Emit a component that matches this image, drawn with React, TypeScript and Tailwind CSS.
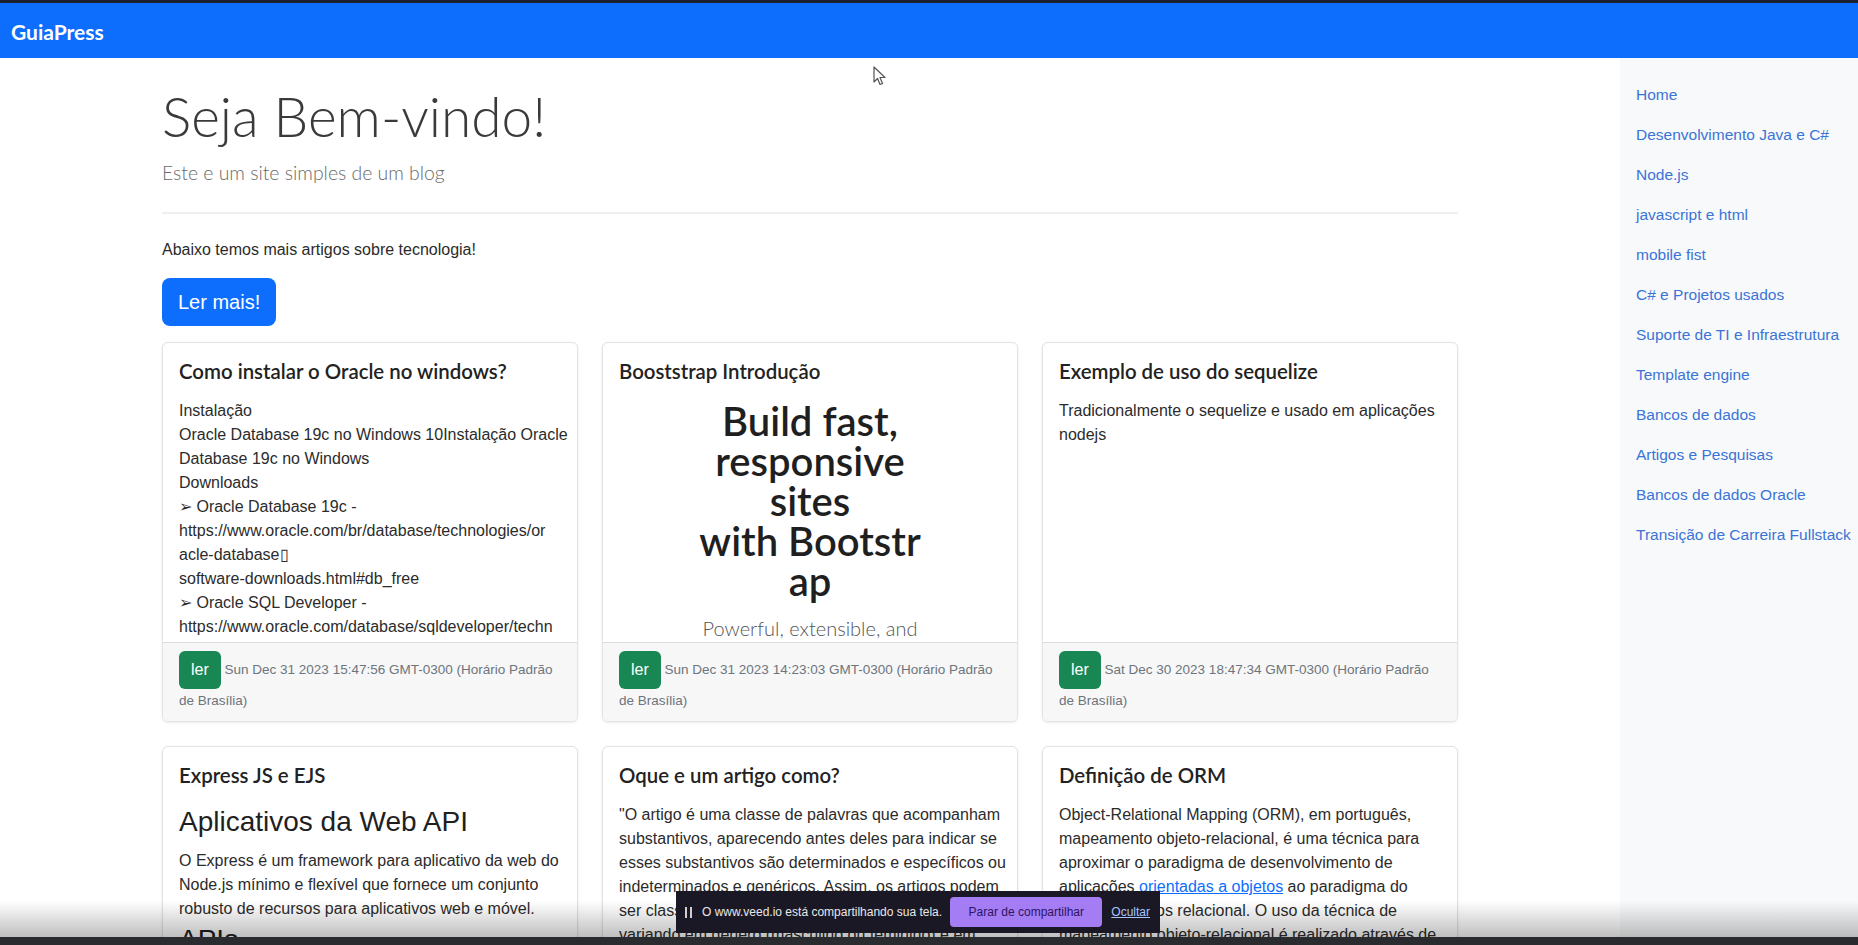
import React from 'react';

const sidebarLinks = [
    'Home',
    'Desenvolvimento Java e C#',
    'Node.js',
    'javascript e html',
    'mobile fist',
    'C# e Projetos usados',
    'Suporte de TI e Infraestrutura',
    'Template engine',
    'Bancos de dados',
    'Artigos e Pesquisas',
    'Bancos de dados Oracle',
    'Transição de Carreira Fullstack',
];

const oracleLines = [
    'Instalação',
    'Oracle Database 19c no Windows 10Instalação Oracle',
    'Database 19c no Windows',
    'Downloads',
    '➢ Oracle Database 19c -',
    'https://www.oracle.com/br/database/technologies/or',
    'acle-database\u25AF',
    'software-downloads.html#db_free',
    '➢ Oracle SQL Developer -',
    'https://www.oracle.com/database/sqldeveloper/techn',
    'nologies/download.html',
];

const artigoLines = [
    '"O artigo é uma classe de palavras que acompanham',
    'substantivos, aparecendo antes deles para indicar se',
    'esses substantivos são determinados e específicos ou',
    'indeterminados e genéricos. Assim, os artigos podem',
    'ser classificados em definidos e indefinidos,',
    'variando em gênero (masculino ou feminino) e em',
];

const Lines = ({ lines }: { lines: string[] }) => (
    <div className="text-base leading-6 text-[#2b2b2b]">
        {lines.map((l, i) => (
            <div key={i} className="whitespace-nowrap">{l}</div>
        ))}
    </div>
);

const Card = ({ title, date, children }: { title: string; date?: string; children: React.ReactNode }) => {
    return (
        <div className="flex flex-col rounded-md border border-[#e3e3e3] bg-white shadow-[0_1px_3px_rgba(0,0,0,0.08)] overflow-hidden">
            <div className="h-[299px] shrink-0 overflow-hidden px-4 pt-4">
                <h5 className="mb-4 whitespace-nowrap font-['Lato',sans-serif] text-[20.4px] font-semibold leading-6 text-[#222]">{title}</h5>
                {children}
            </div>
            {date && (
                <div className="border-t border-[#dcdcdc] bg-[#f7f7f7] px-4 py-2 text-[13.5px] leading-6 text-[#6c757d]">
                    <button className="h-[38px] rounded-md bg-[#198754] px-3 align-middle text-base text-white">ler</button>{' '}
                    {date}
                    <br />
                    de Brasília)
                </div>
            )}
        </div>
    );
};

export default function App() {
    return (
        <div className="relative h-[945px] w-full overflow-hidden bg-white font-['Liberation_Sans',Arial,sans-serif] text-[#212529]">
            {/* top frame strip */}
            <div className="h-[3px] bg-[#1b2130]" />

            {/* Navbar */}
            <nav className="flex h-[55px] items-center bg-[#0d6efd] px-[11px] pt-[2px]">
                <span className="font-['Lato',sans-serif] text-[21px] font-bold text-white">GuiaPress</span>
            </nav>

            <div className="flex">
                {/* Main */}
                <main className="min-w-0 flex-1">
                    <div className="mx-auto w-[1320px] px-3 pt-[25px]">
                        <h1 className="font-['Lato',sans-serif] text-[55px] font-light leading-[67px] text-[#3a3a3a]">Seja Bem-vindo!</h1>
                        <p className="mt-2 font-['Lato',sans-serif] text-[19.4px] font-light leading-[30px] text-[#6a6a6a]">Este e um site simples de um blog</p>
                        <hr className="my-6 border-t-2 border-[#efefef]" />
                        <p className="text-base leading-6 text-[#2b2b2b]">Abaixo temos mais artigos sobre tecnologia!</p>
                        <button className="mt-4 h-[48px] rounded-lg bg-[#0d6efd] px-4 text-[20px] text-white">Ler mais!</button>

                        <div className="mt-4 grid grid-cols-3 gap-6">
                            <Card title="Como instalar o Oracle no windows?" date="Sun Dec 31 2023 15:47:56 GMT-0300 (Horário Padrão">
                                <Lines lines={oracleLines} />
                            </Card>

                            <Card title="Booststrap Introdução" date="Sun Dec 31 2023 14:23:03 GMT-0300 (Horário Padrão">
                                <div className="flex flex-col items-center pt-[2px] text-center">
                                    <div className="font-['Lato',sans-serif] text-[40px] font-semibold leading-10 text-[#1f1f1f]">
                                        <div>Build fast,</div>
                                        <div>responsive</div>
                                        <div>sites</div>
                                        <div>with Bootstr</div>
                                        <div>ap</div>
                                    </div>
                                    <p className="mt-3 font-['Lato',sans-serif] text-[20px] font-light leading-[30px] text-[#555]">Powerful, extensible, and</p>
                                </div>
                            </Card>

                            <Card title="Exemplo de uso do sequelize" date="Sat Dec 30 2023 18:47:34 GMT-0300 (Horário Padrão">
                                <Lines lines={['Tradicionalmente o sequelize e usado em aplicações', 'nodejs']} />
                            </Card>

                            <Card title="Express JS e EJS">
                                <h2 className="mb-2 text-[28px] leading-[38px] text-[#1f1f1f]">Aplicativos da Web API</h2>
                                <Lines
                                    lines={[
                                        'O Express é um framework para aplicativo da web do',
                                        'Node.js mínimo e flexível que fornece um conjunto',
                                        'robusto de recursos para aplicativos web e móvel.',
                                    ]}
                                />
                                <h2 className="text-[28px] leading-[38px] text-[#1f1f1f]">APIs</h2>
                            </Card>

                            <Card title="Oque e um artigo como?">
                                <Lines lines={artigoLines} />
                            </Card>

                            <Card title="Definição de ORM">
                                <div className="text-base leading-6 text-[#2b2b2b]">
                                    <div className="whitespace-nowrap">Object-Relational Mapping (ORM), em português,</div>
                                    <div className="whitespace-nowrap">mapeamento objeto-relacional, é uma técnica para</div>
                                    <div className="whitespace-nowrap">aproximar o paradigma de desenvolvimento de</div>
                                    <div className="whitespace-nowrap">
                                        aplicações <a className="text-[#0d6efd] underline">orientadas a objetos</a> ao paradigma do
                                    </div>
                                    <div className="whitespace-nowrap">banco de dados relacional. O uso da técnica de</div>
                                    <div className="whitespace-nowrap">mapeamento objeto-relacional é realizado através de</div>
                                </div>
                            </Card>
                        </div>
                    </div>
                </main>

                {/* Sidebar */}
                <aside className="h-[887px] w-[238px] shrink-0 bg-[#f8f9fa] pt-[17px]">
                    {sidebarLinks.map((link) => (
                        <a key={link} className="block whitespace-nowrap px-4 py-2 text-[15.5px] leading-6 text-[#3a74d6]">{link}</a>
                    ))}
                </aside>
            </div>

            {/* mouse cursor */}
            <svg className="absolute left-[873px] top-[66px]" width="14" height="21" viewBox="0 0 14 21">
                <path d="M1 1 L1 16 L4.5 12.5 L7 18.5 L9.5 17.5 L7 11.5 L12 11.5 Z" fill="#fff" stroke="#555" strokeWidth="1.2" strokeLinejoin="round" />
            </svg>

            {/* bottom video shading */}
            <div className="absolute bottom-[8px] left-0 h-[36px] w-full bg-gradient-to-b from-transparent to-black/25" />
            <div className="absolute bottom-0 left-0 h-[8px] w-full bg-[#2a2b2e]" />

            {/* screen share bar */}
            <div className="absolute left-[676px] top-[891px] flex h-[42px] w-[484px] items-center bg-[#1b1826] pl-[9px] text-[12px] text-[#e8e8e8]">
                <span className="flex gap-[3px]">
                    <span className="h-[11px] w-[2px] bg-[#d0d0d0]" />
                    <span className="h-[11px] w-[2px] bg-[#d0d0d0]" />
                </span>
                <span className="ml-[10px] whitespace-nowrap">O www.veed.io está compartilhando sua tela.</span>
                <button className="ml-auto h-[30px] w-[152px] rounded bg-[#a47cf3] text-[12px] text-[#2d1466]">Parar de compartilhar</button>
                <a className="ml-[9px] mr-[10px] text-[12px] text-[#a7c4ff] underline">Ocultar</a>
            </div>
        </div>
    );
}
